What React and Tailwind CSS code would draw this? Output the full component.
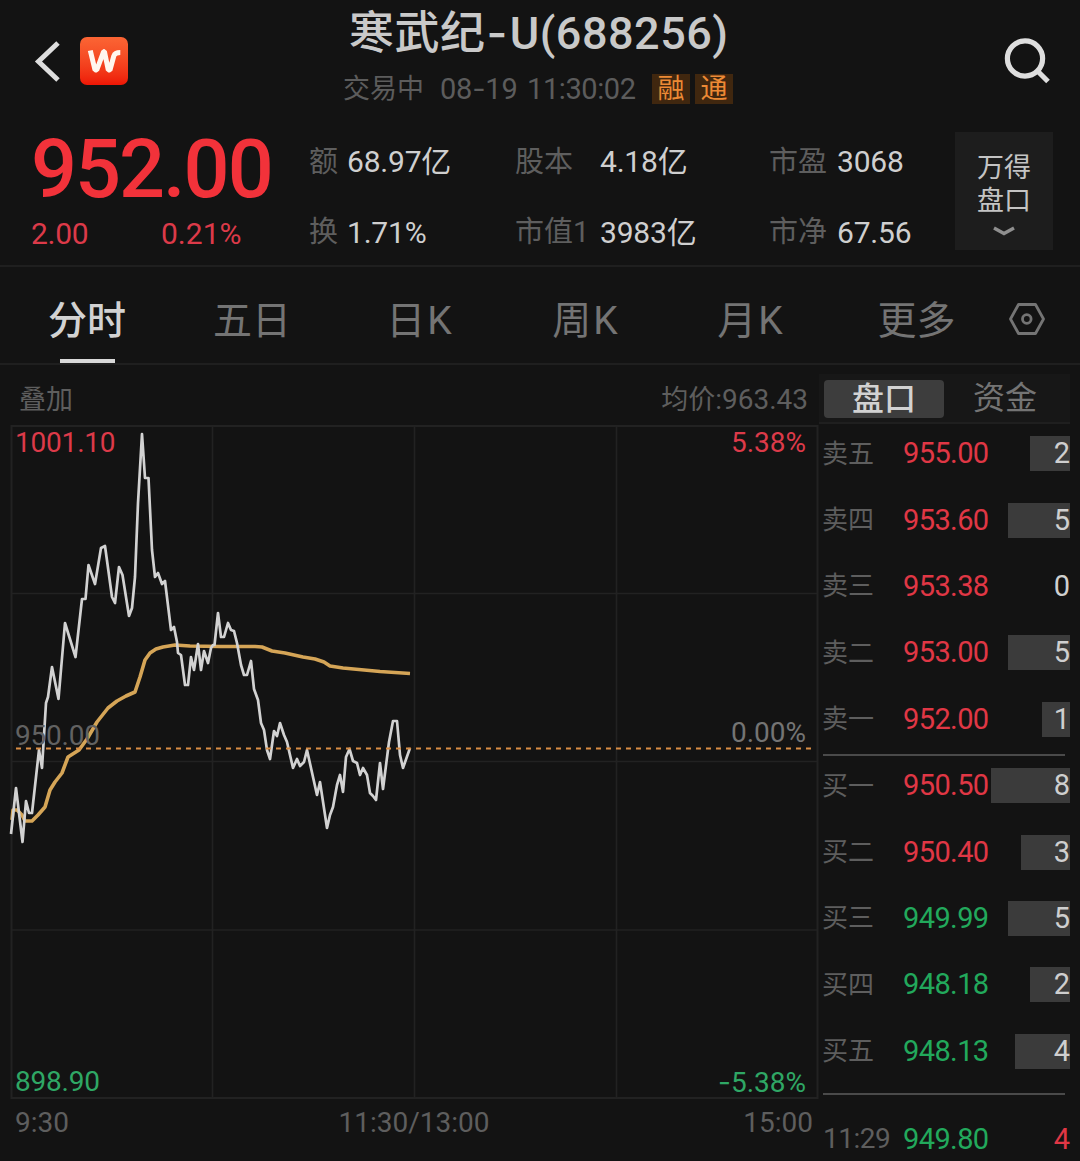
const FONT = "font-['Roboto','Noto_Sans_CJK_SC',sans-serif]";

const PRICE =
  '11,834 16,788 22.5,842 26,801 29,813 32,813 39,750 42,768 46,703 48,697 52,667 58.5,699 65,623 75.5,657 82,599 85.5,599 88.5,565 95,584 101,548 105,546 112,597 115,603 119,567 122.5,575 129,616 132,608 135,577 138,503 142,434 145,478 148.5,478 152,550 155,577 158,573 162,584 165,581 171,630 174,627 177,642 178,653 181,655 185,685 188,685 191,657 194,670 198,644 201,670 204,651 208,663 211,648 213,645 214.5,645 218,613 221,637 224,637 228,623 231,630 234,631 237,643 241,665 244,675 247,675 251,661 254,689 258,700 261,723 264,730 267,750 270,759 274,731 277,736 280,723 284,735 287,742 293,768 297,759 300,766 304,762 307,750 317,795 320,782 327,828 330,815 333,807 337,785 340,775 343,792 346,757 349.5,749 353,761 357,763 360,775 363,768 367,775 370,793 373,796 376,800 380,763 383,789 389,742 393,721 397,721 400,755 403,768 410,748';
const AVERAGE =
  '12,820 13,810 17,810 22,815 25,821 32,821 38,815 45,807 50,790 55,782 62,773 68,757 79,750 87,739 97,722 108,708 117,701 126,696 135,692 140,677 145,660 150,653 156,649 163,647 175,645 190,646 220,646.5 255,646.5 262,647 272,651 285,653 303,657 315,659 324,662 330,666 343,668 380,671.5 410,673.5';

const STATS = [
  ['额', '68.97亿', '股本', '4.18亿', '市盈', '3068'],
  ['换', '1.71%', '市值1', '3983亿', '市净', '67.56'],
];

const TABS = [
  ['分时', 'w-[164px]'],
  ['五日', 'w-[166px]'],
  ['日K', 'w-[170px] tracking-[2px]'],
  ['周K', 'w-[162px] tracking-[2px]'],
  ['月K', 'w-[168px] tracking-[2px]'],
  ['更多', 'w-[163px]'],
];

const SELLS = [
  ['卖五', '955.00', '2', 'w-[40px]'],
  ['卖四', '953.60', '5', 'w-[62px]'],
  ['卖三', '953.38', '0', 'w-0'],
  ['卖二', '953.00', '5', 'w-[62px]'],
  ['卖一', '952.00', '1', 'w-[28px]'],
];
const BUYS = [
  ['买一', '950.50', '8', 'w-[79px]'],
  ['买二', '950.40', '3', 'w-[49px]'],
  ['买三', '949.99', '5', 'w-[62px]'],
  ['买四', '948.18', '2', 'w-[40px]'],
  ['买五', '948.13', '4', 'w-[55px]'],
];

function Hyphen() {
  return <span className="font-['Inter']">-</span>;
}

function Header() {
  return (
    <header className="grid h-[120px] grid-cols-[340px_400px_340px]">
      <div className="flex items-start pt-[37px] pl-[34px]">
        <svg className="mt-1 h-[42px] w-[28px]" viewBox="0 0 28 42" fill="none" stroke="#dedede" strokeWidth="5">
          <path d="M24 2 4.500 20.500 24 39" />
        </svg>
        <div className="ml-[18px] h-12 w-12 rounded-[7px] bg-linear-to-b from-[#fb6534] to-[#ee1505]">
          <svg className="h-12 w-12" viewBox="0 0 48 48" fill="none" stroke="#fff6ee" strokeWidth="5" strokeLinejoin="bevel">
            <path d="M10.300 13.500 15 33 16.800 33 23.600 14.500 24.400 14.500 28.300 33 30 33 33.800 19Q35 15.600 40.300 15.600" />
          </svg>
        </div>
      </div>
      <div className="flex flex-col">
        <h1 className="mt-2 ml-[9px] h-[50px] text-[45px] leading-[50px] font-medium tracking-[0.5px] whitespace-nowrap text-[#c9c9c9]">
          寒武纪
          <span className="ml-[1px] mr-[2px]">
            <Hyphen />
          </span>
          U(688256)
        </h1>
        <div className="mt-[14px] flex h-[34px] items-center text-[27px] leading-none whitespace-nowrap text-[#5c5c5c]">
          <span className="ml-[3px] w-[97px]">交易中</span>
          <span className="w-[87px] text-[29px] leading-[32px] tracking-[-0.2px]">
            08
            <Hyphen />
            19
          </span>
          <span className="w-[125px] text-[29px] tracking-[-0.4px]">11:30:02</span>
          <span className="flex h-[30px] w-[38px] items-center justify-center bg-[#40270f] text-[#ed8a35]">融</span>
          <span className="ml-[5px] flex h-[30px] w-[38px] items-center justify-center bg-[#40270f] text-[#ed8a35]">通</span>
        </div>
      </div>
      <div className="pt-[36px] pl-[262px]">
        <svg className="h-[50px] w-[52px]" viewBox="0 0 52 50" fill="none" stroke="#dedede" strokeWidth="5.200">
          <circle cx="23" cy="22.500" r="17.600" />
          <path d="M35.500 35 46 45.500" />
        </svg>
      </div>
    </header>
  );
}

function Summary() {
  return (
    <section className="flex h-[147px] border-b-2 border-[#1f1f1f]">
      <div className="w-[310px] pl-[31px] leading-none text-[#f2323a]">
        <div className="mt-[8px] flex h-[82px] items-center text-[81px] font-medium tracking-[-2px]">952.00</div>
        <div className="mt-[9px] flex h-[30px] items-center text-[30px] tracking-[-0.3px] text-[#dc3a49]">
          <span className="w-[130px]">2.00</span>
          <span className="tracking-normal">0.21%</span>
        </div>
      </div>
      <div className="w-[645px] pt-[7px]">
        {STATS.map((row) => (
          <div
            key={row[0]}
            className="grid h-[70.500px] grid-cols-[37px_169px_84px_170px_67px_118px] items-center text-[30px] leading-none tracking-[-0.2px] whitespace-nowrap"
          >
            {row.map((cell, i) => (
              <span key={cell} className={i % 2 ? 'text-[#cfcfcf]' : 'ml-[-1px] text-[29px] tracking-normal text-[#5e5e5e]'}>
                {cell}
              </span>
            ))}
          </div>
        ))}
      </div>
      <div className="mt-[12px] flex h-[118px] w-[98px] flex-col items-center bg-[#1d1d1d] pt-[20px] text-[27px] leading-[33px] text-[#c4c4c4]">
        <span>万得</span>
        <span>盘口</span>
        <svg className="mt-[7px] h-[12px] w-[24px]" viewBox="0 0 24 12" fill="none" stroke="#8f8f8f" strokeWidth="3.400">
          <path d="M2 3 12 8.500 22 3" />
        </svg>
      </div>
    </section>
  );
}

function Tabs() {
  return (
    <nav className="flex h-[98px] border-b-2 border-[#1f1f1f] pl-[5px] text-[39px] leading-none text-[#747474]">
      {TABS.map(([label, width], i) => (
        <div key={label} className={`${width} flex flex-col items-center justify-between pt-[35px]`}>
          <span className={i === 0 ? 'font-medium text-[#d2d2d2]' : ''}>{label}</span>
          {i === 0 && <span className="h-1 w-[55px] bg-[#d8d8d8]" />}
        </div>
      ))}
      <svg className="mt-[34px] ml-[10px] h-[36px] w-[38px]" viewBox="0 0 38 36" fill="none" stroke="#747474" strokeWidth="2.800" strokeLinejoin="round">
        <path d="M10.500 3.500H27.500L35.500 18 27.500 32.500H10.500L2.500 18Z" />
        <circle cx="18.800" cy="18" r="4.300" />
      </svg>
    </nav>
  );
}

function Chart() {
  return (
    <section className="w-[819px]">
      <div className="flex h-[60px] items-center justify-between pt-[10px] pr-[11px] pl-[19px] text-[27px] leading-none text-[#5e5e5e]">
        <span>叠加</span>
        <span>
          均价<span className="text-[28px]">:963.43</span>
        </span>
      </div>
      <div className="relative h-[674px] text-[28px] leading-none">
        <svg className="block h-[674px] w-[819px]" viewBox="0 425 819 674" fill="none">
          <g stroke="#222222" strokeWidth="2">
            <path d="M11.500 426H817.500V1098H11.500Z" />
            <path d="M212.500 426V1098M414.500 426V1098M616.500 426V1098M12 593.500H817M12 761.500H817M12 930H817" strokeWidth="1.600" />
          </g>
          <polyline points={AVERAGE} stroke="#d5a557" strokeWidth="3.600" strokeLinejoin="round" />
          <polyline points={PRICE} stroke="#d2d2d2" strokeWidth="2.700" strokeLinejoin="round" />
          <path d="M12 748.500H813" stroke="#d98d45" strokeWidth="2" strokeDasharray="5 5" strokeDashoffset="6" />
        </svg>
        <span className="absolute top-[4px] left-[15px] tracking-[-0.2px] text-[#dc3a49]">1001.10</span>
        <span className="absolute top-[4px] right-[13px] text-[#dc3a49]">5.38%</span>
        <span className="absolute top-[297px] left-[15px] tracking-[-0.2px] text-[#626262]">950.00</span>
        <span className="absolute top-[294px] right-[13px] text-[#747474]">0.00%</span>
        <span className="absolute top-[643px] left-[15px] tracking-[-0.2px] text-[#2fa765]">898.90</span>
        <span className="absolute top-[643px] right-[13px] text-[#2fa765]">
          <Hyphen />
          5.38%
        </span>
      </div>
      <div className="grid h-[46px] grid-cols-3 items-center pt-px pr-[6px] pl-[15px] text-[28px] leading-none text-[#5e5e5e]">
        <span>9:30</span>
        <span className="text-center">11:30/13:00</span>
        <span className="text-right">15:00</span>
      </div>
    </section>
  );
}

function Levels({ rows }) {
  return rows.map(([label, price, volume, bar]) => (
    <div key={label} className="flex h-[66.400px] items-center leading-none">
      <span className="ml-[-1px] w-[81px] text-[26px] text-[#5e5e5e]">{label}</span>
      <span className={`w-[86px] text-[29px] tracking-[-0.6px] ${price >= '950' ? 'text-[#e03745]' : 'text-[#22a95c]'}`}>{price}</span>
      <div className="flex h-[35px] flex-1 justify-end">
        <div className={`${bar} flex h-full items-center justify-end bg-[#3b3b3b] text-[29px] text-[#cfcfcf]`}>{volume}</div>
      </div>
    </div>
  ));
}

function OrderBook() {
  return (
    <aside className="w-[261px]">
      <div className="mt-[9px] mr-[10px] flex h-[50px] items-center border-b-2 border-[#1f1f1f] bg-[#171717] pl-[5px] text-[32px] leading-none">
        <div className="mt-[2px] flex h-[38px] w-[120px] items-center justify-center rounded-[4px] bg-[#3d3d3d] font-medium text-[#d2d2d2]">盘口</div>
        <div className="flex-1 pr-[4px] text-center text-[#747474]">资金</div>
      </div>
      <div className="-mt-[3.500px] pr-[10px] pl-[4px]">
        <Levels rows={SELLS} />
        <div className="mt-[2px] mr-[5px] mb-[-4px] h-[2px] bg-[#4a4a4a]" />
        <Levels rows={BUYS} />
        <div className="mt-[9px] mr-[5px] h-[2px] bg-[#4a4a4a]" />
        <div className="mt-[28px] flex h-[32px] items-center text-[29px] leading-none">
          <span className="w-[80px] text-[28px] tracking-[-0.5px] text-[#5e5e5e]">11:29</span>
          <span className="tracking-[-0.6px] text-[#22a95c]">949.80</span>
          <span className="flex-1 text-right text-[#e03745]">4</span>
        </div>
      </div>
    </aside>
  );
}

export default function App() {
  return (
    <main className={`h-[1161px] w-[1080px] overflow-hidden bg-[#131313] ${FONT}`}>
      <Header />
      <Summary />
      <Tabs />
      <div className="flex">
        <Chart />
        <OrderBook />
      </div>
    </main>
  );
}
